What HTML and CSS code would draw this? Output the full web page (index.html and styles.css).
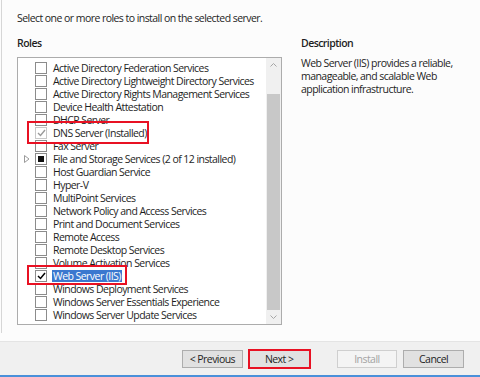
FILE: index.html
```html
<!DOCTYPE html>
<html>
<head>
<meta charset="utf-8">
<link rel="stylesheet" href="styles.css">
</head>
<body>
<div class="page">
  <div class="main">
    <div class="pane">
      <p class="intro">Select one or more roles to install on the selected server.</p>
      <div class="columns">
        <div class="roles">
          <div class="heading">Roles</div>
          <div class="listbox">
            <div class="items">
              <div class="row"><span class="exp"></span><span class="cb"></span><span class="lbl">Active Directory Federation Services</span></div>
              <div class="row"><span class="exp"></span><span class="cb"></span><span class="lbl">Active Directory Lightweight Directory Services</span></div>
              <div class="row"><span class="exp"></span><span class="cb"></span><span class="lbl">Active Directory Rights Management Services</span></div>
              <div class="row"><span class="exp"></span><span class="cb"></span><span class="lbl">Device Health Attestation</span></div>
              <div class="row"><span class="exp"></span><span class="cb"></span><span class="lbl">DHCP Server</span></div>
              <div class="row"><span class="exp"></span><span class="cb cb-dis"><svg width="9" height="8" viewBox="0 0 9 8"><path d="M1 4 L3.5 6.5 L8 1" fill="none" stroke="#9a9a9a" stroke-width="1.4"/></svg></span><span class="lbl">DNS Server (Installed)</span></div>
              <div class="row"><span class="exp"></span><span class="cb"></span><span class="lbl">Fax Server</span></div>
              <div class="row"><span class="exp"><svg width="6" height="8" viewBox="0 0 6 8"><path d="M0.5 0.5 L5 4 L0.5 7.5 Z" fill="none" stroke="#9a9a9a" stroke-width="1"/></svg></span><span class="cb cb-ind"><span class="sq"></span></span><span class="lbl">File and Storage Services (2 of 12 installed)</span></div>
              <div class="row"><span class="exp"></span><span class="cb"></span><span class="lbl">Host Guardian Service</span></div>
              <div class="row"><span class="exp"></span><span class="cb"></span><span class="lbl">Hyper-V</span></div>
              <div class="row"><span class="exp"></span><span class="cb"></span><span class="lbl">MultiPoint Services</span></div>
              <div class="row"><span class="exp"></span><span class="cb"></span><span class="lbl">Network Policy and Access Services</span></div>
              <div class="row"><span class="exp"></span><span class="cb"></span><span class="lbl">Print and Document Services</span></div>
              <div class="row"><span class="exp"></span><span class="cb"></span><span class="lbl">Remote Access</span></div>
              <div class="row"><span class="exp"></span><span class="cb"></span><span class="lbl">Remote Desktop Services</span></div>
              <div class="row"><span class="exp"></span><span class="cb"></span><span class="lbl">Volume Activation Services</span></div>
              <div class="row"><span class="exp"></span><span class="cb"><svg width="9" height="8" viewBox="0 0 9 8"><path d="M1 4 L3.5 6.5 L8 1" fill="none" stroke="#000" stroke-width="1.5"/></svg></span><span class="lbl sel">Web Server (IIS)</span></div>
              <div class="row"><span class="exp"></span><span class="cb"></span><span class="lbl">Windows Deployment Services</span></div>
              <div class="row"><span class="exp"></span><span class="cb"></span><span class="lbl">Windows Server Essentials Experience</span></div>
              <div class="row"><span class="exp"></span><span class="cb"></span><span class="lbl">Windows Server Update Services</span></div>
            </div>
            <div class="scrollbar">
              <div class="arrow up"><svg width="7" height="4" viewBox="0 0 7 4"><path d="M0.5 3.5 L3.5 0.5 L6.5 3.5" fill="none" stroke="#a6a6a6" stroke-width="1"/></svg></div>
              <div class="track-top"></div>
              <div class="thumb"></div>
              <div class="arrow down"><svg width="7" height="4" viewBox="0 0 7 4"><path d="M0.5 0.5 L3.5 3.5 L6.5 0.5" fill="none" stroke="#a6a6a6" stroke-width="1"/></svg></div>
            </div>
          </div>
        </div>
        <div class="desc">
          <div class="heading">Description</div>
          <p class="desc-text">Web Server (IIS) provides a reliable, manageable, and scalable Web application infrastructure.</p>
        </div>
      </div>
    </div>
  </div>
  <div class="footer">
    <button class="btn">&lt; Previous</button>
    <button class="btn btn-next">Next &gt;</button>
    <button class="btn btn-dis">Install</button>
    <button class="btn btn-cancel">Cancel</button>
  </div>
  <div class="mark mark-dns"></div>
  <div class="mark mark-web"></div>
  <div class="mark mark-next"></div>
</div>
</body>
</html>
```
FILE: styles.css
```css
* { box-sizing: border-box; }
html, body { margin: 0; padding: 0; }
body {
  background: #fcfcfc;
  font-family: "Open Sans", sans-serif;
  font-size: 10.5px;
  letter-spacing: -0.55px;
  color: #1e1e1e;
}
.page {
  position: relative;
  width: 480px;
  height: 377px;
  display: flex;
  flex-direction: column;
}
.main {
  height: 341px;
  padding-left: 1px;
}
.pane {
  height: 333px;
  border-left: 1px solid #d6d6d6;
  padding-left: 15px;
  padding-top: 10px;
}
.intro {
  margin: 0;
  line-height: 16px;
  height: 16px;
}
.columns {
  display: flex;
  margin-top: 9px;
}
.roles {
  width: 265px;
  flex: none;
}
.heading {
  line-height: 16px;
  height: 16px;
  font-weight: 600;
  color: #1e1e1e;
}
.listbox {
  margin-top: 6px;
  height: 268px;
  border: 1px solid #acacac;
  background: #fff;
  display: flex;
}
.items {
  flex: 1;
  min-width: 0;
  padding-top: 3px;
  overflow: hidden;
}
.row {
  height: 13px;
  display: flex;
  align-items: center;
  white-space: nowrap;
}
.exp {
  flex: none;
  width: 17px;
  height: 13px;
  padding-left: 6px;
  display: flex;
  align-items: center;
}
.cb {
  width: 12px;
  height: 12px;
  border: 1px solid #8c8c8c;
  background: #fff;
  display: flex;
  align-items: center;
  justify-content: center;
  flex: none;
}
.cb-dis { border-color: #c8c8c8; }
.sq {
  width: 6px;
  height: 6px;
  background: #111;
}
.lbl {
  margin-left: 5px;
  line-height: 12px;
  padding: 0 1px;
}
.lbl.sel {
  background: #3b78cf;
  color: #fff;
}
.scrollbar {
  flex: none;
  width: 15px;
  background: #f0f0f0;
  display: flex;
  flex-direction: column;
}
.arrow {
  height: 14px;
  display: flex;
  align-items: center;
  justify-content: center;
}
.track-top { height: 22px; }
.thumb {
  flex: 1;
  background: #c8c8c8;
  margin: 0 1px;
}
.desc {
  margin-left: 19px;
  width: 165px;
}
.desc-text {
  margin: 6px 0 0;
  line-height: 13px;
}
.footer {
  flex: 1;
  background: #f0f0f0;
  border-top: 1px solid #e4e4e4;
  border-bottom: 2px solid #4a90d9;
  display: flex;
  align-items: flex-start;
  padding: 8px 16px 0 182px;
}
.btn {
  width: 61px;
  height: 18px;
  padding: 0;
  font-family: inherit;
  font-size: 10.5px;
  letter-spacing: -0.55px;
  color: #1e1e1e;
  background: #e1e1e1;
  border: 1px solid #adadad;
  line-height: 16px;
}
.btn-next { margin-left: 6px; }
.btn-dis {
  margin-left: 27px;
  background: #f4f4f4;
  border-color: #cfcfcf;
  color: #a3a3a3;
}
.btn-cancel { margin-left: 6px; }
.mark {
  position: absolute;
  border: 2px solid #e81123;
}
.mark-dns { left: 27px; top: 121px; width: 122px; height: 23px; }
.mark-web { left: 27px; top: 265px; width: 100px; height: 20px; }
.mark-next { left: 248px; top: 349px; width: 63px; height: 20px; }
```
